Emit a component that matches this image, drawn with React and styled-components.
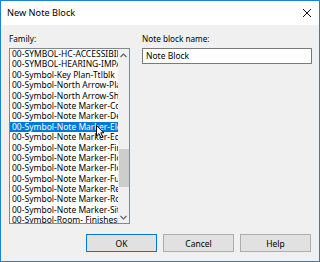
import React from "react";
import styled, { createGlobalStyle } from "styled-components";

const Global = createGlobalStyle`
  html, body { margin: 0; padding: 0; background: #ffffff; }
  body { font-family: "Noto Sans", "Liberation Sans", Arial, sans-serif; }
  * { box-sizing: border-box; }
`;

const Window = styled.div`
  width: 320px;
  height: 262px;
  border: 1px solid #1883d7;
  display: flex;
  flex-direction: column;
  background: #f0f0f0;
  font-family: "Noto Sans", "Liberation Sans", Arial, sans-serif;
  color: #000;
  overflow: hidden;
`;

const TitleBar = styled.div`
  height: 24px;
  flex: none;
  background: #ffffff;
  display: flex;
  align-items: center;
  justify-content: space-between;
  padding: 0 7px 0 6px;
  font-size: 9.2px;
`;

const TitleText = styled.span`
  line-height: 12px;
`;

const CloseIcon = styled.svg`
  width: 10px;
  height: 10px;
  display: block;
`;

const Body = styled.div`
  flex: 1;
  display: flex;
  flex-direction: column;
  padding: 9px 0 9px 0;
`;

const Columns = styled.div`
  display: flex;
  gap: 12px;
  padding: 0 7px 0 8px;
`;

const Column = styled.div`
  display: flex;
  flex-direction: column;
  width: ${(p) => p.$w}px;
`;

const Label = styled.div`
  font-size: 8.2px;
  line-height: 10px;
  height: 10px;
  margin-bottom: 4px;
  white-space: nowrap;
`;

const ListBox = styled.div`
  position: relative;
  height: 176px;
  border: 1px solid #828790;
  background: #ffffff;
  display: flex;
  overflow: hidden;
`;

const Items = styled.div`
  flex: 1;
  min-width: 0;
  display: flex;
  flex-direction: column;
  overflow: hidden;
`;

const Item = styled.div`
  flex: none;
  height: 10.4px;
  line-height: 10.4px;
  font-size: 8.5px;
  padding-left: 2px;
  white-space: nowrap;
  overflow: hidden;
  background: ${(p) => (p.$sel ? "#0078d7" : "transparent")};
  color: ${(p) => (p.$sel ? "#ffffff" : "#000000")};
`;

const ScrollBar = styled.div`
  width: 11px;
  flex: none;
  background: #f0f0f0;
  display: flex;
  flex-direction: column;
`;

const ArrowBox = styled.div`
  height: 12px;
  flex: none;
  display: flex;
  align-items: center;
  justify-content: center;
`;

const Track = styled.div`
  flex: 1;
  display: flex;
  flex-direction: column;
  padding-top: 88px;
  padding-left: 1px;
`;

const Thumb = styled.div`
  height: 38px;
  background: #cdcdcd;
`;

const Cursor = styled.svg`
  position: absolute;
  left: 86px;
  top: 76px;
  width: 10px;
  height: 14px;
`;

const TextBox = styled.div`
  height: 16px;
  border: 1px solid #7a7a7a;
  background: #ffffff;
  font-size: 8.5px;
  line-height: 14px;
  padding-left: 3px;
  white-space: nowrap;
`;

const ButtonRow = styled.div`
  margin-top: 10px;
  display: flex;
  justify-content: flex-end;
  gap: 6px;
  padding-right: 8px;
`;

const Button = styled.div`
  width: 71px;
  height: 18px;
  background: #e1e1e1;
  border: 1px solid ${(p) => (p.$default ? "#0078d7" : "#adadad")};
  font-size: 8.5px;
  display: flex;
  align-items: center;
  justify-content: center;
`;

const items = [
  "00-SYMBOL-HC-ACCESSIBILITY",
  "00-SYMBOL-HEARING-IMPAIRED",
  "00-Symbol-Key Plan-Ttlblk",
  "00-Symbol-North Arrow-Plan",
  "00-Symbol-North Arrow-Sheet",
  "00-Symbol-Note Marker-Code",
  "00-Symbol-Note Marker-Demo",
  "00-Symbol-Note Marker-Electrical",
  "00-Symbol-Note Marker-Equipment",
  "00-Symbol-Note Marker-Finish",
  "00-Symbol-Note Marker-Floor",
  "00-Symbol-Note Marker-Flooring",
  "00-Symbol-Note Marker-Furniture",
  "00-Symbol-Note Marker-Reflected",
  "00-Symbol-Note Marker-Room",
  "00-Symbol-Note Marker-Site",
  "00-Symbol-Room- Finishes(Area)",
];

export default function App() {
  return (
    <>
      <Global />
      <Window>
        <TitleBar>
          <TitleText>New Note Block</TitleText>
          <CloseIcon viewBox="0 0 10 10">
            <path d="M1 1 L9 9 M9 1 L1 9" stroke="#111" strokeWidth="1" fill="none" />
          </CloseIcon>
        </TitleBar>
        <Body>
          <Columns>
            <Column $w={121}>
              <Label>Family:</Label>
              <ListBox>
                <Items>
                  {items.map((t, i) => (
                    <Item key={i} $sel={i === 7}>
                      {t}
                    </Item>
                  ))}
                </Items>
                <ScrollBar>
                  <ArrowBox>
                    <svg width="7" height="5" viewBox="0 0 7 5">
                      <path d="M0.5 4 L3.5 1 L6.5 4" stroke="#606060" strokeWidth="1.1" fill="none" />
                    </svg>
                  </ArrowBox>
                  <Track>
                    <Thumb />
                  </Track>
                  <ArrowBox>
                    <svg width="7" height="5" viewBox="0 0 7 5">
                      <path d="M0.5 1 L3.5 4 L6.5 1" stroke="#606060" strokeWidth="1.1" fill="none" />
                    </svg>
                  </ArrowBox>
                </ScrollBar>
                <Cursor viewBox="0 0 10 14">
                  <path
                    d="M0.5 0.5 L0.5 11 L3 8.6 L5 12.8 L6.8 12 L4.8 7.8 L8 7.8 Z"
                    fill="#ffffff"
                    stroke="#000000"
                    strokeWidth="1"
                    strokeLinejoin="miter"
                  />
                </Cursor>
              </ListBox>
            </Column>
            <Column $w={170}>
              <Label>Note block name:</Label>
              <TextBox>Note Block</TextBox>
            </Column>
          </Columns>
          <ButtonRow>
            <Button $default>OK</Button>
            <Button>Cancel</Button>
            <Button>Help</Button>
          </ButtonRow>
        </Body>
      </Window>
    </>
  );
}
